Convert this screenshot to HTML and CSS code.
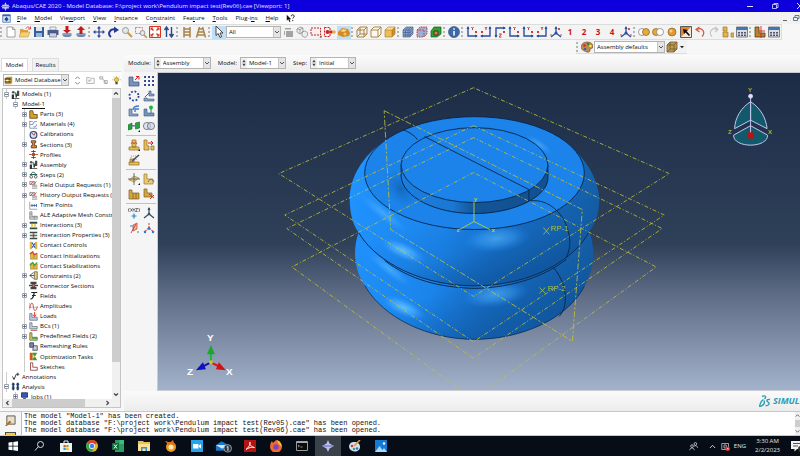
FILE: index.html
```html
<!DOCTYPE html>
<html lang="en">
<head>
<meta charset="utf-8">
<title>Abaqus/CAE 2020</title>
<link rel="stylesheet" href="styles.css">
</head>
<body>
<svg class="defs" aria-hidden="true">
  <symbol id="star" viewBox="0 0 12 12"><path d="M6 0l1.500 3.500h3v1.500L12 6l-1.500 1v1.500h-3L6 12 4.500 8.500h-3V7L0 6l1.500-1V3.500h3z" fill="#b9c3e0"/><path d="M0 6h12" stroke="#5a64b0" stroke-width=".8"/></symbol>
  <symbol id="appwin" viewBox="0 0 12 12"><path d="M1 1h10v10H1z" fill="#dce8f6" stroke="#3a67a8"/><path d="M1 1h10v2H1z" fill="#3a67a8"/><path d="M6 3.500L9 7 6 10 3 7z" fill="#234a8c"/></symbol>
  <symbol id="chev" viewBox="0 0 6 10"><path d="M1 4l2 2 2-2" fill="none" stroke="#555"/></symbol>
  <symbol id="spin" viewBox="0 0 6 12"><path d="M1 5l2-3 2 3zM1 7l2 3 2-3z" fill="#444"/></symbol>
  <symbol id="new" viewBox="0 0 12 12"><path d="M2 1h5.500L10 3.500V11H2z" fill="#fff" stroke="#8a8a8a" stroke-width=".8"/><path d="M7.500 1v2.500H10" fill="none" stroke="#8a8a8a" stroke-width=".8"/></symbol>
  <symbol id="open" viewBox="0 0 12 12"><path d="M1 3h3l1 1h4v7H1z" fill="#d9a441"/><path d="M0 11l2-5h9l-2 5z" fill="#f3cf7a" stroke="#b98a2e" stroke-width=".5"/><path d="M7 2.500c1-2 3-2 4 0M11.500.5v2.500H9" fill="none" stroke="#d33" stroke-width=".9"/></symbol>
  <symbol id="save" viewBox="0 0 12 12"><path d="M1 1h10v10H1z" fill="#34609c"/><path d="M3 1h6v4H3z" fill="#dfe6f0"/><path d="M3 7h6v4H3z" fill="#9db4d4"/></symbol>
  <symbol id="print" viewBox="0 0 12 12"><path d="M3 1h6v3H3z" fill="#eee" stroke="#667" stroke-width=".5"/><path d="M.5 4h11v5H.5z" fill="#4a5e8e"/><path d="M2.500 7h7v4h-7z" fill="#c9d2e6" stroke="#445" stroke-width=".5"/></symbol>
  <symbol id="diskin" viewBox="0 0 12 12"><ellipse cx="6" cy="9" rx="4.500" ry="2" fill="#6f86ac"/><path d="M1.500 7h9v2h-9z" fill="#8ba0c4"/><path d="M4.500 0h3v4H10L6 7.500 2 4h2.500z" fill="#c41c1c"/></symbol>
  <symbol id="diskout" viewBox="0 0 12 12"><ellipse cx="6" cy="9" rx="4.500" ry="2" fill="#6f86ac"/><path d="M1.500 7h9v2h-9z" fill="#8ba0c4"/><path d="M4.500 8h3V4H10L6 0 2 4h2.500z" fill="#c41c1c"/></symbol>
  <symbol id="pan" viewBox="0 0 12 12"><path d="M6 0l2 2.500H6.600V5.400h3V4L12 6 9.600 8V6.600h-3v3H8L6 12 4 9.600h1.400v-3h-3V8L0 6l2.400-2v1.400h3V2.500H4z" fill="#2a3f9d"/></symbol>
  <symbol id="rot" viewBox="0 0 12 12"><path d="M4 11C0 8 3 2.500 8 3.500" fill="none" stroke="#26398f" stroke-width="2"/><path d="M7 .5l5 3.500-5 3z" fill="#26398f"/></symbol>
  <symbol id="mag" viewBox="0 0 12 12"><path d="M6.500 6.500L11 11" stroke="#c39a4c" stroke-width="2"/><circle cx="4.500" cy="4.500" r="3" fill="#e4e8ee" stroke="#999"/></symbol>
  <symbol id="magbox" viewBox="0 0 12 12"><path d="M.5 1.500h7v6h-7z" fill="none" stroke="#d55" stroke-width=".8" stroke-dasharray="2 1"/><path d="M8.500 8.500L12 12" stroke="#c39a4c" stroke-width="1.600"/><circle cx="7.500" cy="7" r="2.400" fill="#e4e8ee" stroke="#888" stroke-width=".8"/></symbol>
  <symbol id="fit" viewBox="0 0 12 12"><path d="M.5.5h11v11H.5z" fill="#fff" stroke="#d9341f"/><path d="M1.500 1.500h3l-1 1 1.500 1.500-1 1-1.500-1.500-1 1zM10.500 1.500v3l-1-1L8 5 7 4l1.500-1.500-1-1zM1.500 10.500v-3l1 1L4 7l1 1-1.500 1.500 1 1zM10.500 10.500h-3l1-1L7 8l1-1 1.500 1.500 1-1z" fill="#d9341f"/></symbol>
  <symbol id="updn" viewBox="0 0 12 12"><path d="M3.500 11V2M1.500 4l2-3 2 3M8.500 1v9M6.500 8l2 3 2-3" fill="none" stroke="#26498f" stroke-width="1.400"/></symbol>
  <symbol id="ladder" viewBox="0 0 12 12"><path d="M3 1v10.500M9 1v10.500M3 3h6M3 6h6M3 9h6" stroke="#a98247" stroke-width="1.500"/></symbol>
  <symbol id="ladder2" viewBox="0 0 12 12"><path d="M4.500 1L1.500 11.500M7.500 1l3 10.500M4 3h4M3 6h6M2 9h8" stroke="#a98247" stroke-width="1.500"/></symbol>
  <symbol id="cursor" viewBox="0 0 12 12"><path d="M3 0v9.500l2.200-2L7 11.500l1.700-.8L7 7h3z" fill="#fff" stroke="#333" stroke-width=".9"/></symbol>
  <symbol id="sheet" viewBox="0 0 12 12"><path d="M3 2h6v1.500H3zM4 5h7v6H4zM2 5h1v4H2z" fill="#a3a3a3"/></symbol>
  <symbol id="cubes" viewBox="0 0 12 12"><path d="M1 3l3-2 3 1v4L4 8 1 6zM4 3v5M1 3l3 .5 3-1.500M6 6l3-1 2.500 1.500v3L9 11.500 6 10z" fill="#eee" stroke="#888" stroke-width=".7"/></symbol>
  <symbol id="dashbox" viewBox="0 0 12 12"><path d="M1 2h9.500v7H1z" fill="none" stroke="#c22" stroke-dasharray="2 1"/><path d="M11.500 9.500v2h-2z" fill="#111"/></symbol>
  <symbol id="dashpick" viewBox="0 0 12 12"><path d="M.5 1.500h5.500v9H.5z" fill="none" stroke="#c22" stroke-dasharray="2 1"/><circle cx="3.500" cy="6" r="2" fill="#c22"/><path d="M5.500 4.500h3v3h-3z" fill="#c22"/><circle cx="10" cy="6" r="1.800" fill="#e8ae3c"/></symbol>
  <symbol id="cheese" viewBox="0 0 12 12"><path d="M0 6l4-4 6 1 2 4-1 3-6 1-5-2z" fill="#d58a22"/><path d="M2 5l3-2 4 1-3 2z" fill="#f8d684"/><circle cx="7" cy="8" r="1.500" fill="#f4c566"/></symbol>
  <symbol id="wire" viewBox="0 0 12 12"><path d="M1 4h7v7H1zM1 4l3-3h7v7l-3 3M8 4l3-3M4 1v7h7M4 8l-3 3" fill="none" stroke="#a37c33" stroke-width=".9"/></symbol>
  <symbol id="hidden" viewBox="0 0 12 12"><path d="M1 4h7v7H1zM1 4l3-3h7v7l-3 3M8 4l3-3" fill="#fdfaf3" stroke="#a37c33" stroke-width=".9"/></symbol>
  <symbol id="shade" viewBox="0 0 12 12"><path d="M1 4h7v7H1z" fill="#f0bd55"/><path d="M1 4l3-3h7L8 4z" fill="#fbe0a0"/><path d="M8 4l3-3v7l-3 3z" fill="#cf8e26"/><path d="M1 4h7v7H1zM1 4l3-3h7v7l-3 3M8 4l3-3" fill="none" stroke="#a8762a" stroke-width=".6"/></symbol>
  <symbol id="mesh" viewBox="0 0 12 12"><path d="M1 4l3-3h7v7l-3 3H1z" fill="#8fa5cc"/><path d="M1 4h7v7H1zM1 4l3-3h7v7l-3 3M8 4l3-3M1 6.500h7l3-3M1 9h7l3-3M3.500 11V4l3-3M6 11V4l3-3" fill="none" stroke="#3d5688" stroke-width=".6"/></symbol>
  <symbol id="mesh2" viewBox="0 0 12 12"><path d="M1 4l3-3h7v7l-3 3H1z" fill="#9ab0d4"/><path d="M1 4h7v7H1zM1 4l3-3h7v7l-3 3" fill="none" stroke="#c43c3c" stroke-dasharray="1.500 1"/></symbol>
  <symbol id="greencube" viewBox="0 0 12 12"><path d="M1 5l3-4h7v7l-4 3H1z" fill="#29a52f" stroke="#14601a" stroke-width=".7"/><path d="M4 5h4v4H4z" fill="#c08a50" stroke="#623"/></symbol>
  <symbol id="info" viewBox="0 0 12 12"><circle cx="6" cy="6" r="5.500" fill="#3f68a6" stroke="#274a80" stroke-width=".6"/><path d="M6 5v4.500M6 2.300v1.500" stroke="#fff" stroke-width="1.500"/></symbol>
  <symbol id="ax1" viewBox="0 0 12 12"><path d="M2 1v9h9" fill="none" stroke="#2a4f9e" stroke-width="1.400"/><path d="M.5 3L2 0l1.500 3zM9 8.500l3 1.500-3 1.500z" fill="#2a4f9e"/><path d="M5.500 1l1 1.500 1-1.500M6.500 2.500V4M9 5l2 2M11 5L9 7" stroke="#c22" stroke-width=".9" fill="none"/></symbol>
  <symbol id="ax2" viewBox="0 0 12 12"><path d="M10 1v9H1" fill="none" stroke="#2a4f9e" stroke-width="1.400"/><path d="M8.500 3L10 0l1.500 3zM3 8.500L0 10l3 1.500z" fill="#2a4f9e"/><path d="M5 1l1 1.500L7 1M6 2.500V4M1 5l2 2M3 5L1 7" stroke="#c22" stroke-width=".9" fill="none"/></symbol>
  <symbol id="ax3" viewBox="0 0 12 12"><path d="M2 11V2h9" fill="none" stroke="#2a4f9e" stroke-width="1.400"/><path d="M.5 9L2 12l1.500-3zM9 .5L12 2 9 3.500z" fill="#2a4f9e"/><path d="M5 8h2.500L5 11h2.500M9 5l2 2M11 5L9 7" stroke="#c22" stroke-width=".9" fill="none"/></symbol>
  <symbol id="tri" viewBox="0 0 12 12"><path d="M6 7V1M6 7L1 11M6 7l5 4" stroke="#2a4f9e" stroke-width="1.300"/><path d="M4.500 3L6 0l1.500 3z" fill="#2a4f9e"/><circle cx="6" cy="7" r="1.500" fill="#2a4f9e"/><path d="M8 2l2 2M10 2L8 4M0 9h2M10 9h2" stroke="#c22" stroke-width=".8"/></symbol>
  <symbol id="ven1" viewBox="0 0 12 12"><circle cx="4" cy="6" r="3.500" fill="#fff" stroke="#777" stroke-width=".7"/><circle cx="8" cy="6" r="3.500" fill="#e7a93b" stroke="#86632a" stroke-width=".7"/></symbol>
  <symbol id="ven2" viewBox="0 0 12 12"><circle cx="4" cy="6" r="3.500" fill="#e7a93b" stroke="#86632a" stroke-width=".7"/><circle cx="8" cy="6" r="3.500" fill="#fff" stroke="#777" stroke-width=".7"/></symbol>
  <symbol id="ball" viewBox="0 0 12 12"><circle cx="6" cy="6" r="4" fill="#dd9b30" stroke="#8a6428" stroke-width=".7"/><circle cx="5" cy="5" r="1.500" fill="#f6cf81"/></symbol>
  <symbol id="boxarrow" viewBox="0 0 12 12"><path d="M.5.5h11v11H.5z" fill="#f8ead9" stroke="#333" stroke-width=".8"/><path d="M1 1h10L1 11z" fill="#e98327"/><path d="M3 3l5 1-1.500 1L10 9 9 10 5.500 6.500 4 8z" fill="#111"/></symbol>
  <symbol id="undo" viewBox="0 0 12 12"><path d="M3 3.500c5-3 9 3 5 7" fill="none" stroke="#d5533e" stroke-width="1.200"/><path d="M5.500 1L2 3.500 5.500 6" fill="none" stroke="#d5533e" stroke-width="1.200"/></symbol>
  <symbol id="redo" viewBox="0 0 12 12"><path d="M9 3.500c-5-3-9 3-5 7M7 1l3 2.500L7 6" fill="none" stroke="#c3c3c3" stroke-width="1.100"/></symbol>
  <symbol id="blocks" viewBox="0 0 12 12"><path d="M1 1h4v4H1zM1 6h5v5H1zM9 7h3v4H9z" fill="#e2b44c" stroke="#9b7527" stroke-width=".7"/></symbol>
  <symbol id="table" viewBox="0 0 12 12"><path d="M.5 1h11v10H.5z" fill="#d6dde6" stroke="#555" stroke-width=".7"/><path d="M.5 1h11v3H.5z" fill="#3c78b4"/><path d="M2 6h2v1.500H2zM5 6h2v1.500H5zM8 6h2v1.500H8zM2 8.500h2V10H2zM5 8.500h2V10H5zM8 8.500h2V10H8z" fill="#556"/></symbol>
  <symbol id="lred" viewBox="0 0 12 12"><path d="M1 1h4v6h6v4H1z" fill="#b9822c" stroke="#59401a" stroke-width=".8"/><path d="M7 0v12M5 5h6" stroke="#d22" stroke-width=".9"/></symbol>
  <symbol id="palette" viewBox="0 0 12 12"><path d="M6 1c4 0 6 2 6 5 0 2-3 1-3 3 0 2-1 2.500-3 2-4-1-6-3-6-5s2-5 6-5z" fill="#b98952" stroke="#674821" stroke-width=".6"/><circle cx="3.500" cy="4.500" r="1.200" fill="#d22"/><circle cx="7" cy="3" r="1.200" fill="#2a8a2a"/><circle cx="9.500" cy="5" r="1.200" fill="#fe3"/><circle cx="4" cy="8" r="1.200" fill="#26c"/></symbol>
  <symbol id="cubeb" viewBox="0 0 12 12"><path d="M1 4l3-3h7v7l-3 3H1z" fill="#bb9a58"/><path d="M1 4h7v7H1zM1 4l3-3h7v7l-3 3M8 4l3-3M4 1v7h7M4 8l-3 3" fill="none" stroke="#725825" stroke-width=".8"/></symbol>
  <symbol id="db" viewBox="0 0 12 12"><path d="M1 3l3-2h7v8l-2 2H1z" fill="#c59a36"/><path d="M1 3h8v2H1zM1 7h8v1.500H1z" fill="#4d3e1a"/><path d="M3 5h3v2H3z" fill="#fff"/></symbol>
  <symbol id="foldup" viewBox="0 0 12 12"><path d="M1 2h4l1 1h5v7H1z" fill="#f7f7f7" stroke="#a5a5a5"/><path d="M4 8V5.500h3" fill="none" stroke="#999"/></symbol>
  <symbol id="link" viewBox="0 0 12 12"><path d="M1 1h4v3H1zM5 4l5 6M7 6h4v4H7z" fill="#f4f4f4" stroke="#999"/></symbol>
  <symbol id="bulb" viewBox="0 0 12 12"><path d="M6 0v2M0 5h2M10 5h2M1.500 1l1.500 1M10.500 1L9 2" stroke="#d9b52a"/><circle cx="6" cy="5" r="2.800" fill="#f2cf3b" stroke="#7c6414" stroke-width=".8"/><path d="M4.500 8h3v3h-3z" fill="#444"/></symbol>

  <symbol id="t-models" viewBox="0 0 12 12"><path d="M1 6h3v5h7v1H1zM6 5h2v5H6z" fill="#333"/><circle cx="3" cy="3" r="1.800" fill="#555"/><path d="M8 1h3v7H8z" fill="#4a4a4a"/><path d="M5 3h2v4H5z" fill="#3e8a72"/></symbol>
  <symbol id="t-part" viewBox="0 0 12 12"><path d="M1 1h4l1 5h5v5H1z" fill="#d9a02a" stroke="#57400f"/></symbol>
  <symbol id="t-mat" viewBox="0 0 12 12"><path d="M1 1v10h10M1 6h4M1 2h4" stroke="#789" fill="none"/><path d="M5 6c1-4 3-4 5-4M6 9c2 1 4-1 4-3" stroke="#3355a0" fill="none"/></symbol>
  <symbol id="t-cal" viewBox="0 0 12 12"><circle cx="6" cy="6.500" r="4.500" fill="#d6e2f2" stroke="#2c3f6b" stroke-width="1.500"/><path d="M3 3l3.500 4L9 3" stroke="#c22" fill="none" stroke-width="1.200"/></symbol>
  <symbol id="t-sec" viewBox="0 0 12 12"><path d="M3 1h6v2.500H7.500v4H10v3H3v-3h1.500v-4H3z" fill="#d88a3a" stroke="#512c12"/></symbol>
  <symbol id="t-prof" viewBox="0 0 12 12"><path d="M4 4h4v4H4z" fill="#a65b34"/><path d="M6 0v12M0 6h12" stroke="#c0492b" stroke-width="1.200"/><path d="M3 2h6M3 10h6" stroke="#422"/></symbol>
  <symbol id="t-step" viewBox="0 0 12 12"><circle cx="3" cy="9" r="1.800" fill="none" stroke="#333"/><circle cx="9" cy="9" r="1.800" fill="none" stroke="#333"/><path d="M3 6c0-4 5-4 6 0M1 6h10" fill="none" stroke="#2b5d4e" stroke-width="1.300"/></symbol>
  <symbol id="t-out" viewBox="0 0 12 12"><path d="M1 2h7v4H1zM4 7h7M4 9h7M4 11h7" fill="#ead6d6" stroke="#777" stroke-width=".9"/><path d="M2 6l3-3 2 2 3-3" stroke="#c33" fill="none"/></symbol>
  <symbol id="t-time" viewBox="0 0 12 12"><path d="M1 1v10h10" stroke="#889" fill="none"/><path d="M2 6h8M4 4v4M7 4v4M10 4v4" stroke="#37569e"/></symbol>
  <symbol id="t-ale" viewBox="0 0 12 12"><path d="M1 1h3v6h7v4H1zM1 4h3M1 8h10M7 7v4" fill="#dadada" stroke="#777" stroke-width=".9"/></symbol>
  <symbol id="t-int" viewBox="0 0 12 12"><path d="M1 1h10v2.500H1zM1 8.500h10V11H1z" fill="#2d4a4a"/><path d="M3 3.500h2v5H3zM7 3.500h2v5H7z" fill="#e2c33f"/></symbol>
  <symbol id="t-intp" viewBox="0 0 12 12"><path d="M1 1h10v2H1zM1 9h10v2H1z" fill="#3a4a4a"/><path d="M1 5h10v2H1z" fill="#2b8c3f"/><path d="M5 3h2v6H5z" fill="#c33"/></symbol>
  <symbol id="t-con" viewBox="0 0 12 12"><path d="M1 1h3v10H1zM8 1h3v10H8z" fill="#e1b740"/><path d="M4 2l4 7M4 9l4-6" stroke="#3c57a5" stroke-width="1.500"/></symbol>
  <symbol id="t-coni" viewBox="0 0 12 12"><path d="M2 3h4v8H2zM7 4h4v7H7z" fill="#e1b740" stroke="#8c6a1d" stroke-width=".6"/><path d="M1 4l4-3 2 4 4-2" stroke="#d03a2a" stroke-width="1.500" fill="none"/></symbol>
  <symbol id="t-cons" viewBox="0 0 12 12"><path d="M2 3h4v8H2zM7 4h4v7H7z" fill="#e1b740" stroke="#8c6a1d" stroke-width=".6"/><path d="M1 6l4-4 2 4 4-4" stroke="#3aa64a" stroke-width="1.500" fill="none"/></symbol>
  <symbol id="t-cst" viewBox="0 0 12 12"><path d="M7 1h4v10H7z" fill="#e7d06a" stroke="#555"/><path d="M6 2L1 6l5 4M1 6h6" stroke="#333" fill="none"/></symbol>
  <symbol id="t-csec" viewBox="0 0 12 12"><path d="M2 1h8v3H2zM2 8h8v3H2z" fill="#444"/><path d="M0 6h12" stroke="#444" stroke-width="2"/><circle cx="6" cy="6" r="2.200" fill="#c66" stroke="#333"/></symbol>
  <symbol id="t-fld" viewBox="0 0 12 12"><path d="M3 2h8M7 2C6 6 6 11 2 10.500M4 6h5" stroke="#222" stroke-width="1.600" fill="none"/></symbol>
  <symbol id="t-amp" viewBox="0 0 12 12"><path d="M1 1v10M0 7h12" stroke="#99a" stroke-width=".8"/><path d="M1 8C3-1 5 0 6 7s4 5 5-1" stroke="#c43a3a" stroke-width="1.200" fill="none"/></symbol>
  <symbol id="t-load" viewBox="0 0 12 12"><path d="M1 2h3v5h7v4H1z" fill="#b9cbe2" stroke="#567" stroke-width=".9"/><path d="M7.500 0v5M5.500 3.500l2 3 2-3" stroke="#c22" stroke-width="1.200" fill="none"/></symbol>
  <symbol id="t-bc" viewBox="0 0 12 12"><path d="M1 1h3v5h7v3H1z" fill="#c4d3e6" stroke="#567" stroke-width=".9"/><path d="M2 11h9" stroke="#b55" stroke-width="1.500"/></symbol>
  <symbol id="t-pre" viewBox="0 0 12 12"><path d="M1 1h3v6h7v4H1z" fill="#e3c13e" stroke="#465" stroke-width=".9"/><path d="M4 7h7v2H4z" fill="#3aa04a"/></symbol>
  <symbol id="t-rem" viewBox="0 0 12 12"><path d="M1 1h5v6H1z" fill="#7889a6" stroke="#334"/><path d="M6 5h5v6H5z" fill="#c9d1df" stroke="#334"/></symbol>
  <symbol id="t-opt" viewBox="0 0 12 12"><path d="M1 1h4v10H1z" fill="#d9531e"/><path d="M5 1h6L8 6l3 5H5z" fill="#2f9c4a"/><path d="M5 3l3 3-3 3z" fill="#f3e04f"/></symbol>
  <symbol id="t-sk" viewBox="0 0 12 12"><path d="M2 1h3v6h6v4H2z" fill="#fff" stroke="#8a3b3b" stroke-width="1.100"/></symbol>
  <symbol id="t-ann" viewBox="0 0 12 12"><path d="M2 6l2 4 3-7M7 3h4M9 1v4" stroke="#333" stroke-width="1.300" fill="none"/></symbol>
  <symbol id="t-ana" viewBox="0 0 12 12"><path d="M3 1v10M9 1v10" stroke="#223d66" stroke-width="2.500"/><path d="M1 3h4M7 3h4M1 8h4M7 8h4" stroke="#223d66" stroke-width="1.500"/></symbol>
  <symbol id="t-job" viewBox="0 0 12 12"><path d="M2 1h8v6H2z" fill="#3459c4" stroke="#223"/><path d="M4 8h4v1H4zM1 10h10v1.500H1z" fill="#334"/></symbol>
  <symbol id="plus" viewBox="0 0 5 5"><path d="M.5.5h4v4h-4z" fill="#fff" stroke="#9aa3ad" stroke-width="1"/><path d="M1 2.500h3M2.500 1v3" stroke="#557" stroke-width=".8"/></symbol>
  <symbol id="minus" viewBox="0 0 5 5"><path d="M.5.5h4v4h-4z" fill="#fff" stroke="#9aa3ad" stroke-width="1"/><path d="M1 2.500h3" stroke="#557" stroke-width=".8"/></symbol>

  <symbol id="b1" viewBox="0 0 12 12"><path d="M1 2h4v5h6v4H1z" fill="#7693bd" stroke="#3e557a" stroke-width=".7"/><path d="M7 5l3-3M8 1.500h3v3" stroke="#d22" fill="none"/></symbol>
  <symbol id="b2" viewBox="0 0 12 12"><path d="M2 2h.1M6 2h.1M10 2h.1M2 6h.1M6 6h.1M10 6h.1M2 10h.1M6 10h.1M10 10h.1" stroke="#2d3f93" stroke-width="1.800" stroke-linecap="square"/></symbol>
  <symbol id="b3" viewBox="0 0 12 12"><circle cx="6" cy="6" r="4.600" fill="none" stroke="#2d3f93" stroke-width="1.800" stroke-dasharray="1.800 1.810"/></symbol>
  <symbol id="b4" viewBox="0 0 12 12"><path d="M1 8h3v1h7v2H1zM6 1h2v3h3v2H6z" fill="#8aa4cc" stroke="#3e557a" stroke-width=".6"/><path d="M2 7l4-4" stroke="#36c" /></symbol>
  <symbol id="b5" viewBox="0 0 12 12"><path d="M1 4h3v5h6v2H1z" fill="#8aa4cc" stroke="#3e557a" stroke-width=".6"/><path d="M5 5c0-3 2-4 6-4M11 4H7v3" fill="none" stroke="#47c" stroke-width="1.400"/></symbol>
  <symbol id="b6" viewBox="0 0 12 12"><path d="M1 4h3v4h7v3H1z" fill="#7693bd" stroke="#3e557a" stroke-width=".6"/><circle cx="8" cy="2.500" r="2" fill="#1fb43a"/><path d="M8 4v4" stroke="#186"/></symbol>
  <symbol id="b7" viewBox="0 0 12 12"><path d="M0 5l4-2v6l-4 1zM7.500 3l4-1v6l-4 1z" fill="#24a53d" stroke="#145f23" stroke-width=".6"/><path d="M4 5h3.500v1.500H4z" fill="#76c"/><path d="M12 10v2h-2z" fill="#111"/></symbol>
  <symbol id="b8" viewBox="0 0 12 12"><circle cx="4" cy="6" r="3.600" fill="#dde4f0" stroke="#556" stroke-width=".7"/><circle cx="8" cy="6" r="3.600" fill="#c5d0e3" fill-opacity=".6" stroke="#556" stroke-width=".7"/></symbol>
  <symbol id="b9" viewBox="0 0 12 12"><path d="M1 8h10v3H1zM4 1h4v7H4z" fill="#e8be5a" stroke="#8f6c22" stroke-width=".7"/><path d="M3 5l1.500-2L6 5M6 5l1.500-2L9 5" stroke="#c33" stroke-width=".8" fill="none"/><path d="M12 10v2h-2z" fill="#111"/></symbol>
  <symbol id="b10" viewBox="0 0 12 12"><path d="M1 1h3v6h2v4H1zM8 7h3v4H8z" fill="#e8be5a" stroke="#8f6c22" stroke-width=".7"/><path d="M5 4h5M8 2l2 2-2 2" stroke="#c22" fill="none"/></symbol>
  <symbol id="b11" viewBox="0 0 12 12"><path d="M1 8h10v3H1zM2 5h4v3H2z" fill="#e8be5a" stroke="#8f6c22" stroke-width=".7"/><path d="M4 7l7-6" stroke="#444" stroke-width="1.500"/><path d="M3 2h5v4H3z" fill="none" stroke="#777" stroke-width=".7" stroke-dasharray="1 1"/></symbol>
  <symbol id="b12" viewBox="0 0 12 12"><path d="M1 7l5-4 5 2-5 4z" fill="#ecc870" stroke="#9b7a2e" stroke-width=".6"/><path d="M6 0v12M0 6h12" stroke="#456" stroke-width=".8"/><path d="M12 10v2h-2z" fill="#111"/></symbol>
  <symbol id="b13" viewBox="0 0 12 12"><path d="M1 1h3v5h6v5H1z" fill="#ecc870" stroke="#9b7a2e" stroke-width=".7"/><path d="M5 9c2-4 5-3 6 0" stroke="#47a" fill="none"/></symbol>
  <symbol id="b14" viewBox="0 0 12 12"><path d="M1 2h3v3h7v6H1z" fill="#d6a544" stroke="#7c5d1d" stroke-width=".7"/><path d="M5 5v6M8 5v6" stroke="#7c5d1d" stroke-width=".7"/></symbol>
  <symbol id="b15" viewBox="0 0 12 12"><path d="M1 1h3v4h5v4H1z" fill="#d6a544" stroke="#7c5d1d" stroke-width=".7"/><path d="M6 6l5 4M11 7l-4 4" stroke="#b33"/></symbol>
  <symbol id="b16" viewBox="0 0 12 12"><path d="M1.500 1C0 2.500 0 4 1.500 5M10.500 1c1.500 1.500 1.500 3 0 4M2.500 1.500l2 3M4.500 1.500l-2 3M5 1.500l1 1.500 1-1.500M6 3v1.500M7.500 1.500h2l-2 3h2" stroke="#333" stroke-width=".7" fill="none"/><path d="M6 6.500v5M3.500 9h5" stroke="#28c" stroke-width="1.200"/></symbol>
  <symbol id="b17" viewBox="0 0 12 12"><path d="M6 7V1M6 7l-5 4M6 7l5 4" stroke="#334b66" stroke-width="1.200"/><path d="M4.500 3L6 0l1.500 3z" fill="#334b66"/><circle cx="6" cy="7" r="1.300" fill="#334b66"/></symbol>
  <symbol id="b18" viewBox="0 0 12 12"><path d="M5 3l4-2v6L5 9z" fill="#f0b98a" stroke="#c33" stroke-width=".7"/><path d="M3 11l5-9" stroke="#c22" stroke-width=".8"/><path d="M2 4h3M10 9v2" stroke="#38c"/></symbol>
  <symbol id="b19" viewBox="0 0 12 12"><path d="M6 6V1M6 6l-5 4M6 6l5 4" stroke="#d44" stroke-width="1.100" stroke-dasharray="2 1"/><circle cx="6" cy="6.500" r="1.400" fill="#2a7ad0"/><circle cx="2" cy="10" r="1.200" fill="#2a7ad0"/><circle cx="10" cy="10" r="1.200" fill="#2a7ad0"/></symbol>
</svg>

<header class="title">
  <svg class="i9"><use href="#star"/></svg>
  <h1>Abaqus/CAE 2020 - Model Database: F:\project work\Pendulum impact test(Rev06).cae [Viewport: 1]</h1>
  <div class="winctl">
    <button aria-label="Minimize"><svg viewBox="0 0 8 8"><path d="M1 4.500h6" stroke="#dfe0ff"/></svg></button>
    <button aria-label="Restore"><svg viewBox="0 0 8 8"><path d="M1.500 2.500h4v4h-4zM3 2.500v-1h4v4H5.500" fill="none" stroke="#dfe0ff" stroke-width=".8"/></svg></button>
    <button aria-label="Close"><svg viewBox="0 0 8 8"><path d="M1 1l6 6M7 1L1 7" stroke="#dfe0ff"/></svg></button>
  </div>
</header>

<nav class="menu">
  <svg class="i9"><use href="#appwin"/></svg>
  <a href="#"><u>F</u>ile</a><a href="#"><u>M</u>odel</a><a href="#">Vie<u>w</u>port</a><a href="#"><u>V</u>iew</a><a href="#"><u>I</u>nstance</a><a href="#">Co<u>n</u>straint</a><a href="#">Fea<u>t</u>ure</a><a href="#"><u>T</u>ools</a><a href="#">Plug-i<u>n</u>s</a><a href="#"><u>H</u>elp</a>
  <button aria-label="Context help"><svg class="i9" viewBox="0 0 12 12"><path d="M1 1v8l2-2 1.500 3.500L6 10 4.500 7H7z" fill="#111"/><path d="M7 3c0-3 4-2 4 0 0 1.500-2 1.500-2 3M9 8v1.500" fill="none" stroke="#111" stroke-width="1.300"/></svg></button>
  <div class="subctl">
    <button aria-label="Minimize viewport"><svg viewBox="0 0 8 8"><path d="M2 6.500h4" stroke="#666"/></svg></button>
    <button aria-label="Restore viewport"><svg viewBox="0 0 8 8"><path d="M1.500 3.500h4v3h-4zM3 3V1.500h4v3H6" fill="none" stroke="#678"/></svg></button>
  </div>
</nav>

<div class="bar">
  <i class="grip"></i>
  <button aria-label="New"><svg><use href="#new"/></svg></button><button aria-label="Open"><svg><use href="#open"/></svg></button><button aria-label="Save"><svg><use href="#save"/></svg></button><button aria-label="Print"><svg><use href="#print"/></svg></button><button aria-label="Load state"><svg><use href="#diskin"/></svg></button><button aria-label="Save state"><svg><use href="#diskout"/></svg></button>
  <i class="grip"></i>
  <button aria-label="Pan"><svg><use href="#pan"/></svg></button><button aria-label="Rotate"><svg><use href="#rot"/></svg></button><button aria-label="Magnify"><svg><use href="#mag"/></svg></button><button aria-label="Box zoom"><svg><use href="#magbox"/></svg></button><button aria-label="Fit"><svg><use href="#fit"/></svg></button><button aria-label="Cycle"><svg><use href="#updn"/></svg></button>
  <i class="grip"></i>
  <button aria-label="Perspective off"><svg><use href="#ladder"/></svg></button><button aria-label="Perspective on"><svg><use href="#ladder2"/></svg></button>
  <i class="grip"></i>
  <button class="on" aria-label="Select"><svg><use href="#cursor"/></svg></button>
  <span class="combo filter"><select aria-label="Filter"><option>All</option></select><svg class="dd"><use href="#chev"/></svg></span>
  <button aria-label="Selection options"><svg><use href="#sheet"/></svg></button>
  <button aria-label="Group"><svg><use href="#cubes"/></svg></button><button aria-label="Drag shape"><svg><use href="#dashbox"/></svg></button><button aria-label="Inside"><svg><use href="#dashpick"/></svg></button><button class="on" aria-label="Exterior"><svg><use href="#cheese"/></svg></button>
  <i class="grip"></i>
  <button aria-label="Wireframe"><svg><use href="#wire"/></svg></button><button aria-label="Hidden"><svg><use href="#hidden"/></svg></button><button aria-label="Shaded"><svg><use href="#shade"/></svg></button>
  <i class="grip"></i>
  <button aria-label="Mesh"><svg><use href="#mesh"/></svg></button><button aria-label="Mesh seeds"><svg><use href="#mesh2"/></svg></button><button aria-label="Geometry"><svg><use href="#greencube"/></svg></button>
  <i class="grip"></i>
  <button aria-label="Query"><svg><use href="#info"/></svg></button>
  <i class="grip"></i>
  <button aria-label="XY view"><svg><use href="#ax1"/></svg></button><button aria-label="YX view"><svg><use href="#ax2"/></svg></button><button aria-label="XZ view"><svg><use href="#ax3"/></svg></button><button aria-label="ZX view"><svg><use href="#ax1"/></svg></button><button aria-label="YZ view"><svg><use href="#ax1"/></svg></button><button aria-label="ZY view"><svg><use href="#ax2"/></svg></button><button aria-label="Iso view"><svg><use href="#tri"/></svg></button>
  <button class="num">1</button><button class="num">2</button><button class="num">3</button><button class="num">4</button>
  <button aria-label="Save view"><svg><use href="#tri"/></svg></button>
  <i class="grip"></i>
  <button aria-label="Replace"><svg><use href="#ven1"/></svg></button><button aria-label="Remove"><svg><use href="#ven2"/></svg></button><button aria-label="All visible"><svg><use href="#ball"/></svg></button><button aria-label="Display group"><svg><use href="#boxarrow"/></svg></button><button aria-label="Undo"><svg><use href="#undo"/></svg></button><button aria-label="Redo"><svg><use href="#redo"/></svg></button><button aria-label="Parts list"><svg><use href="#blocks"/></svg></button><button aria-label="Manager"><svg><use href="#table"/></svg></button>
  <i class="grip"></i>
  <button aria-label="View cut"><svg><use href="#lred"/></svg></button><button aria-label="View cut manager"><svg><use href="#table"/></svg></button>
</div>

<div class="bar2">
  <div class="colors">
    <i class="grip"></i>
    <button aria-label="Color code"><svg><use href="#palette"/></svg></button>
    <span class="combo"><select aria-label="Color mapping"><option>Assembly defaults</option></select><svg class="dd"><use href="#chev"/></svg></span>
    <button aria-label="Translucency"><svg><use href="#cubeb"/></svg></button>
    <svg class="caret" viewBox="0 0 6 6"><path d="M0 1.500h6L3 5z" fill="#222"/></svg>
  </div>
</div>

<main>
  <aside>
    <div class="tabs"><button class="cur">Model</button><button>Results</button></div>
    <div class="dbrow">
      <span class="combo"><svg class="i9"><use href="#db"/></svg><select aria-label="Tree source"><option>Model Database</option></select><svg class="dd"><use href="#chev"/></svg></span>
      <button aria-label="Step"><svg class="i9" viewBox="0 0 12 12"><path d="M3 4l3-3 3 3M3 8l3 3 3-3" fill="none" stroke="#888" stroke-width="1.300"/></svg></button>
      <button aria-label="Up"><svg class="i9"><use href="#foldup"/></svg></button>
      <button aria-label="Link"><svg class="i9"><use href="#link"/></svg></button>
      <button aria-label="Tips"><svg class="i9"><use href="#bulb"/></svg></button>
    </div>
    <div class="treebox">
      <ul class="tree">
        <li><b class="x"><svg><use href="#minus"/></svg></b><svg class="ic"><use href="#t-models"/></svg><span>Models (1)</span></li>
        <li class="l1"><b class="x"><svg><use href="#minus"/></svg></b><span class="sel">Model-1</span></li>
        <li class="l2"><b class="x"><svg><use href="#plus"/></svg></b><svg class="ic"><use href="#t-part"/></svg><span>Parts (3)</span></li>
        <li class="l2"><b class="x"><svg><use href="#plus"/></svg></b><svg class="ic"><use href="#t-mat"/></svg><span>Materials (4)</span></li>
        <li class="l2"><b class="x"></b><svg class="ic"><use href="#t-cal"/></svg><span>Calibrations</span></li>
        <li class="l2"><b class="x"><svg><use href="#plus"/></svg></b><svg class="ic"><use href="#t-sec"/></svg><span>Sections (3)</span></li>
        <li class="l2"><b class="x"></b><svg class="ic"><use href="#t-prof"/></svg><span>Profiles</span></li>
        <li class="l2"><b class="x"><svg><use href="#plus"/></svg></b><svg class="ic"><use href="#t-models"/></svg><span>Assembly</span></li>
        <li class="l2"><b class="x"><svg><use href="#plus"/></svg></b><svg class="ic"><use href="#t-step"/></svg><span>Steps (2)</span></li>
        <li class="l2"><b class="x"><svg><use href="#plus"/></svg></b><svg class="ic"><use href="#t-out"/></svg><span>Field Output Requests (1)</span></li>
        <li class="l2"><b class="x"><svg><use href="#plus"/></svg></b><svg class="ic"><use href="#t-out"/></svg><span>History Output Requests (1)</span></li>
        <li class="l2"><b class="x"></b><svg class="ic"><use href="#t-time"/></svg><span>Time Points</span></li>
        <li class="l2"><b class="x"></b><svg class="ic"><use href="#t-ale"/></svg><span>ALE Adaptive Mesh Constraints</span></li>
        <li class="l2"><b class="x"><svg><use href="#plus"/></svg></b><svg class="ic"><use href="#t-int"/></svg><span>Interactions (3)</span></li>
        <li class="l2"><b class="x"><svg><use href="#plus"/></svg></b><svg class="ic"><use href="#t-intp"/></svg><span>Interaction Properties (3)</span></li>
        <li class="l2"><b class="x"></b><svg class="ic"><use href="#t-con"/></svg><span>Contact Controls</span></li>
        <li class="l2"><b class="x"></b><svg class="ic"><use href="#t-coni"/></svg><span>Contact Initializations</span></li>
        <li class="l2"><b class="x"></b><svg class="ic"><use href="#t-cons"/></svg><span>Contact Stabilizations</span></li>
        <li class="l2"><b class="x"><svg><use href="#plus"/></svg></b><svg class="ic"><use href="#t-cst"/></svg><span>Constraints (2)</span></li>
        <li class="l2"><b class="x"></b><svg class="ic"><use href="#t-csec"/></svg><span>Connector Sections</span></li>
        <li class="l2"><b class="x"><svg><use href="#plus"/></svg></b><svg class="ic"><use href="#t-fld"/></svg><span>Fields</span></li>
        <li class="l2"><b class="x"></b><svg class="ic"><use href="#t-amp"/></svg><span>Amplitudes</span></li>
        <li class="l2"><b class="x"></b><svg class="ic"><use href="#t-load"/></svg><span>Loads</span></li>
        <li class="l2"><b class="x"><svg><use href="#plus"/></svg></b><svg class="ic"><use href="#t-bc"/></svg><span>BCs (1)</span></li>
        <li class="l2"><b class="x"><svg><use href="#plus"/></svg></b><svg class="ic"><use href="#t-pre"/></svg><span>Predefined Fields (2)</span></li>
        <li class="l2"><b class="x"></b><svg class="ic"><use href="#t-rem"/></svg><span>Remeshing Rules</span></li>
        <li class="l2"><b class="x"></b><svg class="ic"><use href="#t-opt"/></svg><span>Optimization Tasks</span></li>
        <li class="l2"><b class="x"></b><svg class="ic"><use href="#t-sk"/></svg><span>Sketches</span></li>
        <li><b class="x"></b><svg class="ic"><use href="#t-ann"/></svg><span>Annotations</span></li>
        <li><b class="x"><svg><use href="#minus"/></svg></b><svg class="ic"><use href="#t-ana"/></svg><span>Analysis</span></li>
        <li class="l1"><b class="x"><svg><use href="#plus"/></svg></b><svg class="ic"><use href="#t-job"/></svg><span>Jobs (1)</span></li>
      </ul>
      <div class="vscroll"><svg viewBox="0 0 8 8"><path d="M2 5l2-2 2 2" fill="none" stroke="#444" stroke-width="1.200"/></svg><i></i><svg viewBox="0 0 8 8"><path d="M2 3l2 2 2-2" fill="none" stroke="#444" stroke-width="1.200"/></svg></div>
      <div class="hscroll"><svg viewBox="0 0 8 8"><path d="M5 2L3 4l2 2" fill="none" stroke="#444" stroke-width="1.200"/></svg><i></i><svg viewBox="0 0 8 8"><path d="M3 2l2 2-2 2" fill="none" stroke="#444" stroke-width="1.200"/></svg></div>
    </div>
  </aside>

  <section class="work">
    <div class="context">
      <label for="module">Module:</label><span class="combo module"><svg class="sp"><use href="#spin"/></svg><select id="module"><option>Assembly</option></select><svg class="dd"><use href="#chev"/></svg></span>
      <label for="model">Model:</label><span class="combo"><svg class="sp"><use href="#spin"/></svg><select id="model"><option>Model-1</option></select><svg class="dd"><use href="#chev"/></svg></span>
      <label for="step">Step:</label><span class="combo"><svg class="sp"><use href="#spin"/></svg><select id="step"><option>Initial</option></select><svg class="dd"><use href="#chev"/></svg></span>
    </div>
    <div class="canvas">
      <div class="tools">
        <div class="grp"><button aria-label="Create instance"><svg><use href="#b1"/></svg></button><button aria-label="Linear pattern"><svg><use href="#b2"/></svg></button><button aria-label="Radial pattern"><svg><use href="#b3"/></svg></button><button aria-label="Translate instance"><svg><use href="#b4"/></svg></button><button aria-label="Rotate instance"><svg><use href="#b5"/></svg></button><button aria-label="Translate to"><svg><use href="#b6"/></svg></button><button aria-label="Constraint"><svg><use href="#b7"/></svg></button><button aria-label="Merge"><svg><use href="#b8"/></svg></button></div>
        <div class="grp"><button aria-label="Extrude"><svg><use href="#b9"/></svg></button><button aria-label="Cut"><svg><use href="#b10"/></svg></button><button aria-label="Edit feature"><svg><use href="#b11"/></svg></button></div>
        <div class="grp"><button aria-label="Partition cell"><svg><use href="#b12"/></svg></button><button aria-label="Partition face"><svg><use href="#b13"/></svg></button><button aria-label="Partition edge"><svg><use href="#b14"/></svg></button><button aria-label="Repair"><svg><use href="#b15"/></svg></button></div>
        <div class="grp"><button aria-label="Datum point"><svg><use href="#b16"/></svg></button><button aria-label="Datum axis"><svg><use href="#b17"/></svg></button><button aria-label="Datum plane"><svg><use href="#b18"/></svg></button><button aria-label="Datum system"><svg><use href="#b19"/></svg></button></div>
      </div>
      <div class="view">
        <svg viewBox="157 72 643 318" preserveAspectRatio="xMidYMid slice" role="img" aria-label="Model viewport">
          <defs>
            <linearGradient id="bodyA" x1="349" y1="190" x2="599" y2="250" gradientUnits="userSpaceOnUse"><stop offset="0" stop-color="#2093ff"/><stop offset=".4" stop-color="#1b84ea"/><stop offset=".62" stop-color="#176fc8"/><stop offset="1" stop-color="#145ca3"/></linearGradient>
            <linearGradient id="under" x1="455" y1="215" x2="475" y2="286" gradientUnits="userSpaceOnUse"><stop offset="0" stop-color="#0d4f94" stop-opacity="0"/><stop offset=".5" stop-color="#0d4f94" stop-opacity=".15"/><stop offset="1" stop-color="#0d4f94" stop-opacity=".65"/></linearGradient>
            <linearGradient id="under2" x1="455" y1="285" x2="475" y2="339" gradientUnits="userSpaceOnUse"><stop offset="0" stop-color="#0d4f94" stop-opacity="0"/><stop offset="1" stop-color="#0d4f94" stop-opacity=".55"/></linearGradient>
            <linearGradient id="side" x1="400" y1="0" x2="548" y2="0" gradientUnits="userSpaceOnUse"><stop offset="0" stop-color="#1a7ee0"/><stop offset=".35" stop-color="#1a78d4"/><stop offset=".5" stop-color="#125596"/><stop offset="1" stop-color="#125092"/></linearGradient>
            <radialGradient id="hl"><stop offset="0" stop-color="#5cc0ff"/><stop offset=".5" stop-color="#45a9ff" stop-opacity=".7"/><stop offset="1" stop-color="#2090ff" stop-opacity="0"/></radialGradient>
            <radialGradient id="dk"><stop offset="0" stop-color="#0d5199" stop-opacity=".8"/><stop offset="1" stop-color="#1266b8" stop-opacity="0"/></radialGradient>
          </defs>
          <path d="M358 232C352 248 353 268 364 285C383 318 428 339 474 339C522 339 567 318 584 286C595 266 595 248 589 231z" fill="url(#bodyA)"/>
          <path d="M358 232C352 248 353 268 364 285C383 318 428 339 474 339C522 339 567 318 584 286C595 266 595 248 589 231z" fill="url(#under2)"/>
          <ellipse cx="388" cy="268" rx="30" ry="7" fill="url(#hl)" opacity=".6" transform="rotate(38 388 268)"/>
          <ellipse cx="403" cy="307" rx="25" ry="9" fill="url(#hl)" transform="rotate(24 403 307)"/>
          <ellipse cx="495" cy="294" rx="34" ry="13" fill="url(#hl)" opacity=".6" transform="rotate(-8 495 294)"/>
          <path d="M364 285C383 318 428 339 474 339C522 339 567 318 584 286" fill="none" stroke="#0b2d55" stroke-width=".8"/>
          <path d="M384 260C410 280 440 287 474 288C515 287 545 275 566 259" fill="none" stroke="#0a2a52"/>
          <path d="M384 140C362 155 349 177 349 198C349 212 352 224 358 232C370 254 410 285 474 285.500C533 285 575 258 589 231C596 222 599 211 599 198C598 178 586 158 566 142L474 116z" fill="url(#bodyA)"/>
          <path d="M358 232C370 254 410 285 474 285.500C533 285 575 258 589 231C596 222 599 211 599 198L349 198C349 212 352 224 358 232z" fill="url(#under)"/>
          <ellipse cx="402" cy="250" rx="26" ry="9" fill="url(#hl)" transform="rotate(24 402 250)"/>
          <ellipse cx="383" cy="213" rx="32" ry="7" fill="url(#hl)" opacity=".55" transform="rotate(38 383 213)"/>
          <ellipse cx="496" cy="238" rx="34" ry="14" fill="url(#hl)" opacity=".6" transform="rotate(-6 496 238)"/>
          <path d="M358 232C370 254 410 285 474 285.500C533 285 575 258 589 231" fill="none" stroke="#0a2a52"/>
          <ellipse cx="474" cy="172.500" rx="110" ry="56.500" fill="#1b83e9" stroke="#0a2547" stroke-width=".9"/>
          <ellipse cx="400" cy="188" rx="22" ry="14" fill="url(#dk)" opacity=".7" transform="rotate(50 400 188)"/>
          <ellipse cx="539" cy="144" rx="17" ry="5" fill="url(#hl)" opacity=".5" transform="rotate(35 539 144)"/>
          <path d="M400.500 164v12C402 196 434 213 474 213C514 213 547 196 547.500 178V164z" fill="url(#side)" stroke="#08203f" stroke-width=".9"/>
          <ellipse cx="474" cy="164.500" rx="73.500" ry="37.500" fill="#1b83e9" stroke="#0a2547" stroke-width=".9"/>
          <path d="M424 136L528.500 189v11.500M402 129C408 131 413 134 417 139M528.500 200.500C545 198 557 208 564 220C571 236 571 246 566 257M553 267C562 278 565 288 565 298C565 306 563 311 559 316" fill="none" stroke="#0a2547" stroke-width=".9"/>
          <g fill="none" stroke="#c5c430" stroke-width=".8" stroke-dasharray="4 2 1 2">
            <path d="M473 87L278 173L473 296L669 173z"/>
            <path d="M473 125L284 214.500L473 341.500L664 214.500z"/>
            <path d="M473 137L286 228L473 358L662 228z"/>
            <path d="M473 172L291 266.500L473 399L656 266.500z"/>
            <path d="M383.500 110L582 209L572 341L390 229z" stroke-dasharray="6 2 2 2"/>
          </g>
          <g fill="none" stroke="#b9cf47" stroke-width=".9"><path d="M473.500 201v20L459 229M473.500 221l16 8"/><path d="M543 227l6 7M549 227l-6 7M539 287l6 6M545 287l-6 6" stroke-width=".7"/></g>
          <g class="lbl" fill="#b9cf47"><text x="473" y="201">Y</text><text x="456" y="232">z</text><text x="491" y="232">x</text></g>
          <g class="rp" fill="#a5bd3a"><text x="550" y="231">RP-1</text><text x="547" y="291">RP-2</text></g>
          <g>
            <path d="M210 362v-10" stroke="#1fb43a" stroke-width="2"/><path d="M206 354l4-9 4 9z" fill="#18a82c"/>
            <path d="M210 362l8 4" stroke="#d11" stroke-width="2"/><path d="M215 369l3-7 7 8z" fill="#d01212"/>
            <path d="M210 362l-8 4" stroke="#11b" stroke-width="2"/><path d="M205 369l-3-7-7 8z" fill="#1010c0"/>
            <circle cx="210" cy="362" r="2" fill="#c9c41f"/>
            <g class="axis" fill="#fff"><text x="206" y="341">Y</text><text x="225" y="375">X</text><text x="186" y="375">Z</text></g>
          </g>
          <g fill="#11596b" stroke="#c3c5ee">
            <path d="M750.500 101C741 107 735 117 734.500 128L750.500 119.500zM750.500 101C760 107 766 117 767 128L750.500 119.500z"/>
            <path d="M750.500 125L733.500 134.500C733 141 742 144.500 750.500 144.500S768 141 767.500 134.500z"/>
            <path d="M750.500 96v38"/><circle cx="750.500" cy="95.500" r="2" fill="#e4e4fb"/><path d="M748 132h5.500v5.500H748z" fill="#c01010" stroke="#c01010" stroke-width=".5"/>
          </g>
          <g class="lbl" fill="#b4b22e"><text x="748" y="91">Y</text><text x="728" y="133">Z</text><text x="768" y="133">X</text></g>
        </svg>
      </div>
    </div>
    <div class="prompt">
      <svg class="ds" viewBox="0 0 12 12"><path d="M3 1.500c3-1.500 5 0 2.500 2.500M4.500 4.500C2 6 1 9 .5 11.500c3-.5 6-3 4.500-6M11 4.500c-3-.5-4 1-2 2.500s1 4-2.500 3.500" fill="none" stroke="#2e9db3" stroke-width="1.400"/></svg>
      <span class="simulia">SIMULIA</span>
    </div>
  </section>
</main>

<section class="messages">
  <div class="msgtabs">
    <button aria-label="Message area"><svg viewBox="0 0 12 12"><path d="M2 1h9v9H2z" fill="#eadfc8" stroke="#555"/><path d="M0 12l5-6 2 2-5 4z" fill="#a8741f"/></svg></button>
    <button aria-label="Command line"><svg viewBox="0 0 12 12"><path d="M0 0h12v12H0z" fill="#444"/><path d="M1 1h10v11H1z" fill="#f0c94d"/></svg></button>
  </div>
  <pre>The model "Model-1" has been created.
The model database "F:\project work\Pendulum impact test(Rev05).cae" has been opened.
The model database "F:\project work\Pendulum impact test(Rev06).cae" has been opened.</pre>
  <div class="mscroll"><svg viewBox="0 0 8 8"><path d="M1 5l3-3 3 3" fill="none" stroke="#444" stroke-width="1.200"/></svg><i></i><svg viewBox="0 0 8 8"><path d="M1 3l3 3 3-3" fill="none" stroke="#444" stroke-width="1.200"/></svg></div>
</section>

<footer>
  <div class="apps">
    <button aria-label="Start"><svg viewBox="0 0 12 12"><path d="M1.500 2.500l4-.5v3.700h-4zM6.300 1.900l4.700-.7v4.500H6.300zM1.500 6.500h4v3.700l-4-.5zM6.300 6.500H11V11l-4.700-.7z" fill="#fff"/></svg></button>
    <button aria-label="Search"><svg viewBox="0 0 12 12"><circle cx="7.500" cy="4.500" r="3" fill="none" stroke="#ddd"/><path d="M5.500 6.500L2 10.500" stroke="#ddd"/></svg></button>
    <button aria-label="Store"><svg viewBox="0 0 12 12"><path d="M0 3h12v9H0z" fill="#f2f2f2"/><path d="M4 3V1h4v2" fill="none" stroke="#f2f2f2"/><path d="M3.500 5h2.200v2.200H3.500z" fill="#e4502e"/><path d="M6.300 5h2.200v2.200H6.300z" fill="#7cb518"/><path d="M3.500 7.800h2.200V10H3.500z" fill="#1ba1e2"/><path d="M6.300 7.800h2.200V10H6.300z" fill="#f7b500"/></svg></button>
    <button aria-label="Chrome"><svg viewBox="0 0 12 12"><circle cx="6" cy="6" r="6" fill="#e2b61f"/><path d="M6 6L.8 3A6 6 0 0 1 11.200 3z" fill="#df4030"/><path d="M6 6L.8 3A6 6 0 0 0 6 12l2.500-5z" fill="#35a352"/><circle cx="6" cy="6" r="2.900" fill="#fff"/><circle cx="6" cy="6" r="2.200" fill="#4080ec"/></svg></button>
    <button aria-label="Excel"><svg viewBox="0 0 12 12"><path d="M3 0h9v12H3z" fill="#2a9c60"/><path d="M7.500 0H12v4H7.500z" fill="#3dbd7b"/><path d="M0 3h7v7H0z" fill="#126b3b"/><path d="M2 4.500l3 4M5 4.500l-3 4" stroke="#fff"/></svg></button>
    <button aria-label="Explorer"><svg viewBox="0 0 12 12"><path d="M0 1h5l1 1h6v9H0z" fill="#eec04c"/><path d="M0 4h12v7H0z" fill="#f9e09a"/><path d="M3 7h6v4H7.500V8.500h-3V11H3z" fill="#3f8fd0"/></svg></button>
    <button aria-label="Player"><svg viewBox="0 0 12 12"><circle cx="6" cy="7" r="5" fill="#ef9a1e"/><path d="M0 1l5 1.500L8 0l1 3 2 2-7 1z" fill="#e07312"/><circle cx="6" cy="7" r="2.500" fill="#fbe9b4"/></svg></button>
    <button aria-label="Zoom"><svg viewBox="0 0 12 12"><path d="M0 0h12v12H0z" fill="#29a3e8"/><path d="M2 4h5.500v4.500H2zM8 5.500L10 4v4.500L8 7z" fill="#fff"/></svg></button>
    <button aria-label="Mail"><svg class="wide" viewBox="0 0 18 13"><path d="M1 5l6-4 7 4v6H1z" fill="#1a78c8"/><path d="M1 5l6.500 4L14 5z" fill="#cfe6fa"/><circle cx="13.500" cy="8.500" r="4" fill="#29323c" stroke="#bbb" stroke-width=".8"/><path d="M12.500 7.500l1.200-1V11" stroke="#fff" fill="none"/></svg></button>
    <button aria-label="Acrobat"><svg viewBox="0 0 12 12"><path d="M0 0h12v12H0z" fill="#b51212"/><path d="M2 9.500C5 7.500 6.500 4 6 2c-1 2 1 5 4.500 5.500C8 6.500 4 8 2 9.500z" fill="none" stroke="#fff" stroke-width=".9"/></svg></button>
    <button aria-label="Firefox"><svg viewBox="0 0 12 12"><path d="M6 0c3 1 6 3 6 7a6 5.500 0 0 1-12 0c0-3 1-5 2-6l1 2z" fill="#f2672a"/><path d="M7 0c3 1 5 4 4.500 7L8 3z" fill="#fbc12d"/><circle cx="6" cy="7" r="2.700" fill="#7a45c4"/></svg></button>
    <button aria-label="Terminal"><svg viewBox="0 0 12 12"><path d="M.5 1.500h11v9H.5z" fill="#0b0b0b" stroke="#999"/><path d="M.5 1.500h11v1.500H.5z" fill="#aaa"/><path d="M2 5l1.500 1L2 7M4.500 7h2" stroke="#ccc" fill="none" stroke-width=".7"/></svg></button>
    <button class="act" aria-label="Abaqus"><svg viewBox="0 0 12 12"><path d="M6 0l1.500 3.500L12 6 7.500 8.500 6 12 4.500 8.500 0 6l4.500-2.500z" fill="#bcc0ee"/><path d="M0 6h12" stroke="#6268b5"/></svg></button>
    <button aria-label="Paint"><svg viewBox="0 0 12 12"><path d="M5 2c4 0 6 2 6 5s-3 5-6 4.500S0 9 0 6.500 2 2 5 2z" fill="#cfe0ee"/><circle cx="3" cy="6" r="1.200" fill="#d33"/><circle cx="5" cy="9" r="1.200" fill="#2a6"/><circle cx="8" cy="8.500" r="1.200" fill="#36c"/><path d="M5 6l6-6" stroke="#d99a3a" stroke-width="1.600"/></svg></button>
    <button aria-label="Photos"><svg viewBox="0 0 12 12"><path d="M0 0h12v12H0z" fill="#1679d3"/><path d="M0 12l4.500-6 3 4L9 8l3 4z" fill="#a8d8fb"/><circle cx="9" cy="3.500" r="1.200" fill="#fff"/></svg></button>
  </div>
  <div class="tray">
    <svg viewBox="0 0 12 12"><circle cx="8.500" cy="2.500" r="1.800" fill="none" stroke="#ddd"/><circle cx="4" cy="5.500" r="1.800" fill="none" stroke="#ddd"/><path d="M1 11c0-4 6-4 6 0M6.500 6c2-2 4.500-1 5 2" fill="none" stroke="#ddd"/></svg>
    <svg class="up" viewBox="0 0 12 12"><path d="M2.500 8L6 4.500 9.500 8" fill="none" stroke="#ddd" stroke-width="1.200"/></svg>
    <svg viewBox="0 0 12 12"><path d="M1 2h9v8H1zM4 4h3v4H4z" fill="none" stroke="#ccc"/><circle cx="9" cy="9" r="3" fill="#e03030"/><path d="M8 8l2 2M10 8l-2 2" stroke="#fff" stroke-width=".8"/></svg>
    <span>ENG</span>
    <time>3:30 AM<br>2/2/2023</time>
    <svg class="note" viewBox="0 0 12 12"><path d="M0 1h12v8H6l-2.500 2.500V9H0z" fill="#f2f2f2"/><path d="M2 3.500h8M2 6h5" stroke="#555"/><circle cx="10" cy="9" r="3" fill="#333"/></svg>
  </div>
</footer>
</body>
</html>
```
FILE: styles.css
```css
* { box-sizing: border-box; }
body {
  margin: 0;
  height: 100vh;
  display: flex;
  flex-direction: column;
  overflow: hidden;
  background: #f7f7f7;
  color: #0c0c0c;
  font: 6px/8px "Open Sans", "Noto Sans", sans-serif;
}
.defs { position: absolute; width: 0; height: 0; }
button, select { font: inherit; color: inherit; background: none; border: 0; padding: 0; margin: 0; }
button { display: flex; align-items: center; justify-content: center; flex: none; }
svg { display: block; flex: none; }
.i9 { width: 9px; height: 9px; }

/* Title bar and menu */
.title { display: flex; align-items: center; height: 12px; flex: none; padding-left: 1px; gap: 2px; background: #0d00dc; color: #e4e6ff; }
.title h1 { margin: 0; font-size: 6px; font-weight: 400; white-space: nowrap; }
.winctl { display: flex; gap: 17px; margin-left: auto; margin-right: -4px; }
.winctl svg, .subctl svg { width: 8px; height: 8px; }
.menu { display: flex; align-items: center; height: 12px; flex: none; padding-left: 2px; gap: 8px; background: linear-gradient(90deg, #fefefe 50%, #f1f1f1); }
.menu a { color: inherit; text-decoration: none; white-space: nowrap; }
.menu > svg { margin-right: -2px; }
.subctl { display: flex; gap: 3px; margin-left: auto; }

/* Toolbars */
.bar { display: flex; align-items: center; height: 16px; flex: none; width: max-content; background: #f3f3f3; border: 1px solid #dcdcdc; border-width: 1px 1px 1px 0; }
.bar button, .colors button { width: 14px; height: 13px; }
.bar svg, .colors button svg { width: 12px; height: 12px; }
.bar .on { background: #bfdff7; }
.bar .num { color: #c81414; font-size: 8px; font-weight: 700; }
.grip { width: 4px; height: 10px; flex: none; border-left: 2px dotted #b5b5b5; border-right: 1px solid transparent; }
.combo { display: flex; align-items: center; height: 12px; background: #fff; border: 1px solid #b3b3b3; }
.combo select { appearance: none; flex: 1; min-width: 0; padding-left: 2px; line-height: 10px; outline: 0; }
.combo .dd, .bar .dd { width: 7px; height: 10px; background: #e4e4e4; border-left: 1px solid #c4c4c4; }
.combo .sp { width: 6px; height: 10px; background: #efefef; }
.filter { width: 55px; }
.bar2 { height: 15px; flex: none; }
.colors { display: flex; align-items: center; width: max-content; height: 14px; margin-left: 72%; padding-right: 3px; background: #f2f2f2; border-bottom: 1px solid #ddd; }
.colors .combo { width: 71px; }
.caret { width: 4px; height: 6px; margin-left: 1px; }

/* Model tree */
main { display: flex; flex: 1; min-height: 0; }
aside { display: flex; flex-direction: column; width: 121px; flex: none; margin-right: 3px; padding-bottom: 3px; }
.tabs { display: flex; gap: 4px; height: 16px; padding: 3px 1px 0; }
.tabs button { width: 27px; height: 13px; background: #f1f1f1; border: 1px solid #ddd; border-bottom: 0; }
.tabs .cur { background: #fff; }
.dbrow { display: flex; align-items: center; gap: 4px; height: 17px; padding-left: 3px; background: #fff; border-top: 1px solid #ddd; }
.dbrow .combo { width: 67px; }
.treebox { display: grid; grid-template: minmax(0, 1fr) 8px / 1fr 8px; flex: 1; min-height: 0; margin-left: 2px; border: 1px solid #c4c4c4; background: #fff; }
.tree { display: grid; grid-auto-rows: 1fr; margin: 0 0 -3px; padding: 0; list-style: none; overflow: hidden; clip-path: inset(0 0 3px 0); }
.tree li { display: flex; align-items: center; min-height: 0; white-space: nowrap; }
.tree .l1 { padding-left: 9px; }
.tree .l2 { padding-left: 18px; }
.tree span { margin-left: 2px; }
.tree .sel { margin-left: 3px; border-bottom: 1px solid #111; }
.ic { width: 9px; height: 9px; margin-left: 1px; }
.x { display: grid; place-items: center; align-self: stretch; width: 7px; flex: none; background: linear-gradient(#ccc, #ccc) 3px 0 / 1px 100% no-repeat; }
.x svg { width: 5px; height: 5px; }
.vscroll, .mscroll { display: flex; flex-direction: column; background: #f0f0f0; }
.vscroll svg { width: 8px; height: 9px; }
.vscroll i { flex: 1; margin-bottom: 28px; background: #cdcdcd; }
.hscroll { display: flex; grid-column: 1 / -1; padding-right: 8px; background: #f0f0f0; z-index: 1; }
.hscroll svg { width: 9px; height: 8px; }
.hscroll i { flex: 1; margin-right: 18px; background: #cdcdcd; }

/* Work area */
.work { display: flex; flex-direction: column; flex: 1; min-width: 0; }
.context { display: flex; align-items: center; height: 17px; flex: none; padding: 0 4px 2px; background: linear-gradient(#fbfbfb, #ececec); }
.context .combo { width: 46px; margin: 0 7px 0 3px; }
.context .module { width: 57px; }
.canvas { display: flex; flex: 1; min-height: 0; }
.tools { width: 33px; flex: none; padding: 0 1px 0 2px; background: #f5f5f5; }
.grp { display: grid; grid-template-columns: 15px 15px; grid-auto-rows: 15px; padding: 1px 0 2px; border-bottom: 1px solid #c2c2c2; }
.grp:last-child { border: 0; }
.grp button svg { width: 12px; height: 12px; }
.view { flex: 1; min-width: 0; background: linear-gradient(#1c2c47, #2f4059 54%, #5f6c86 70%, #a3b2cb); border: 1px solid #c9cdd3; border-width: 1px 0 1px 1px; }
.view > svg { width: 100%; height: 100%; }
.lbl { font: bold 6px "Liberation Sans", sans-serif; }
.rp { font: 8px "Liberation Sans", sans-serif; }
.axis { font: bold 10px "Liberation Sans", sans-serif; }
.prompt { display: flex; align-items: center; justify-content: flex-end; gap: 2px; height: 20px; flex: none; overflow: hidden; background: linear-gradient(#fafafa, #ececec); }
.ds { width: 12px; height: 12px; }
.simulia { margin-right: -8px; font: italic 700 9px/12px "Open Sans", sans-serif; color: #2e9db3; }

/* Message area */
.messages { display: flex; height: 25px; flex: none; background: #fff; border: 1px solid #c8c8c8; border-width: 1px 0; }
.msgtabs { display: flex; flex-direction: column; align-items: center; gap: 6px; width: 22px; padding-top: 3px; overflow: hidden; border-right: 1px solid #bbb; background: #f6f6f6; }
.msgtabs svg { width: 11px; height: 11px; }
.messages pre { flex: 1; margin: 0; padding: 1px 2px; font: 7px/7px "Liberation Mono", monospace; color: #111; overflow: hidden; }
.mscroll { width: 5px; }
.mscroll svg { width: 5px; height: 8px; }
.mscroll i { flex: 1; background: #cdcdcd; }

/* Taskbar */
footer { display: flex; justify-content: space-between; height: 20px; flex: none; background: #060d16; color: #e4e6e8; }
.apps { display: grid; grid-template-columns: repeat(15, 1fr); width: 49.250%; }
.apps svg { width: 12px; height: 12px; }
.apps .wide { width: 17px; height: 13px; }
.apps .act { background: #3a4149; }
.tray { display: flex; align-items: center; gap: 4px; }
.tray svg { width: 9px; height: 9px; }
.tray .up { margin-left: 6px; }
.tray time { margin-left: 5px; text-align: center; line-height: 9px; }
.tray .note { width: 12px; height: 12px; margin: 0 -3px 0 7px; }
```
